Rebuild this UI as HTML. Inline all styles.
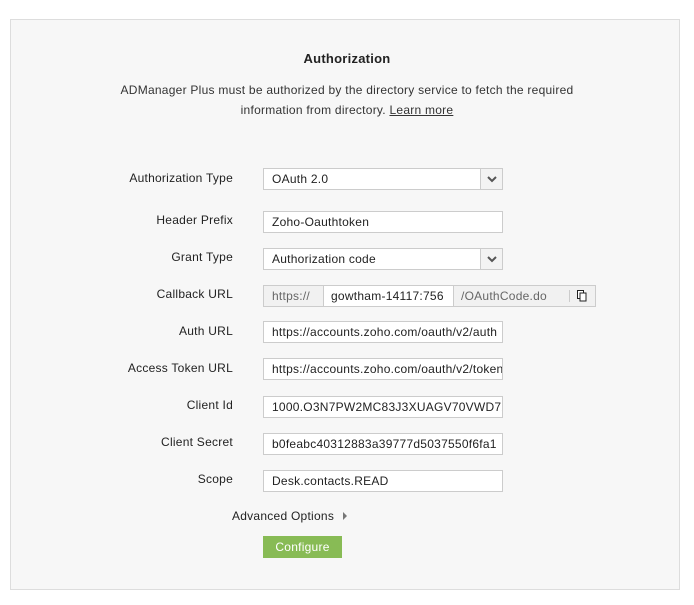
<!DOCTYPE html>
<html><head><style>
*{box-sizing:border-box;margin:0;padding:0}
body{width:694px;height:605px;background:#fff;font-family:"Liberation Sans",Arial,sans-serif;font-size:12px;color:#222;position:relative;overflow:hidden;letter-spacing:0.25px}
.box{position:absolute;left:10px;top:19px;width:670px;height:571px;background:#f7f7f7;border:1px solid #ddd}
.t{position:absolute;left:0;width:694px;text-align:center}
.lbl{position:absolute;right:461px;text-align:right;white-space:nowrap}
.in{position:absolute;left:263px;width:240px;height:22px;background:#fff;border:1px solid #ccc;padding-left:8px;line-height:20px;white-space:nowrap;overflow:hidden}
.sel .arr{position:absolute;right:0;top:0;width:22px;height:20px;border-left:1px solid #ccc;background:#f3f3f3}
.arr svg{position:absolute;left:6px;top:7px}
</style></head><body>
<div class="box"></div>
<div class="t" style="top:51px;font-weight:bold;font-size:13px">Authorization</div>
<div class="t" style="top:83px;color:#333">ADManager Plus must be authorized by the directory service to fetch the required</div>
<div class="t" style="top:103px;color:#333">information from directory. <span style="text-decoration:underline">Learn more</span></div>

<div class="lbl" style="top:171px">Authorization Type</div>
<div class="in sel" style="top:168px">OAuth 2.0<div class="arr"><svg width="10" height="7"><path d="M1 1L5 5L9 1" stroke="#555" stroke-width="2" fill="none"/></svg></div></div>
<div class="lbl" style="top:213px">Header Prefix</div>
<div class="in" style="top:211px">Zoho-Oauthtoken</div>
<div class="lbl" style="top:250px">Grant Type</div>
<div class="in sel" style="top:248px">Authorization code<div class="arr"><svg width="10" height="7"><path d="M1 1L5 5L9 1" stroke="#555" stroke-width="2" fill="none"/></svg></div></div>
<div class="lbl" style="top:287px">Callback URL</div>
<div style="position:absolute;left:263px;top:285px;width:333px;height:22px;border:1px solid #ccc;background:#f1f1f1;line-height:20px;color:#666">
<span style="position:absolute;left:8px">https://</span>
<span style="position:absolute;left:59px;top:0;width:131px;height:20px;background:#fff;border-left:1px solid #ccc;border-right:1px solid #ccc;padding-left:7px;color:#222">gowtham-14117:756</span>
<span style="position:absolute;left:197px">/OAuthCode.do</span>
<span style="position:absolute;left:305px;top:4px;height:12px;border-left:1px solid #ccc"></span>
<svg style="position:absolute;left:313px;top:4px" width="10" height="12"><rect x="0.5" y="0.5" width="6" height="8" fill="#fff" stroke="#222"/><rect x="3" y="3" width="6" height="8" fill="#fff" stroke="#222"/></svg>
</div>
<div class="lbl" style="top:324px">Auth URL</div>
<div class="in" style="top:321px">https://accounts.zoho.com/oauth/v2/auth</div>
<div class="lbl" style="top:361px">Access Token URL</div>
<div class="in" style="top:358px">https://accounts.zoho.com/oauth/v2/token</div>
<div class="lbl" style="top:398px">Client Id</div>
<div class="in" style="top:396px">1000.O3N7PW2MC83J3XUAGV70VWD72</div>
<div class="lbl" style="top:435px">Client Secret</div>
<div class="in" style="top:433px">b0feabc40312883a39777d5037550f6fa1</div>
<div class="lbl" style="top:472px">Scope</div>
<div class="in" style="top:470px">Desk.contacts.READ</div>
<div style="position:absolute;left:232px;top:509px">Advanced Options <svg width="6" height="8" style="margin-left:4px"><path d="M1 0L5 4L1 8Z" fill="#777"/></svg></div>
<div style="position:absolute;left:263px;top:536px;width:79px;height:22px;background:#88bb55;color:#fff;text-align:center;line-height:22px">Configure</div>
</body></html>
